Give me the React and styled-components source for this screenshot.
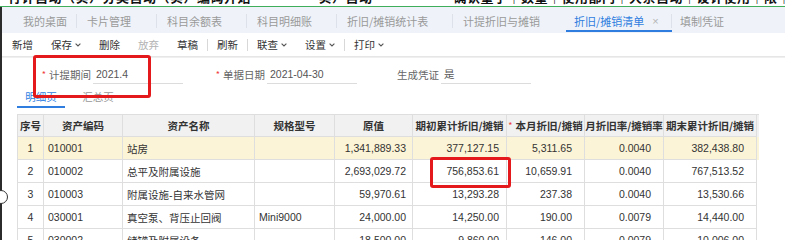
import React from "react";
import styled, { createGlobalStyle } from "styled-components";

const Global = createGlobalStyle`
  html, body { margin: 0; padding: 0; background: #fff; }
  body {
    font-family: "Liberation Sans", "Noto Sans CJK SC", sans-serif;
    font-size: 10.5px;
    color: #333;
    width: 785px;
    height: 240px;
    overflow: hidden;
  }
`;

const Page = styled.div`
  width: 785px;
  height: 240px;
  overflow: hidden;
`;

const TopStrip = styled.div`
  height: 6px;
  overflow: hidden;
  border-bottom: 1px solid #3fae5a;
`;

const StripText = styled.div`
  margin-top: -10px;
  white-space: nowrap;
  font-family: "Noto Sans CJK SC", sans-serif;
  font-size: 13px;
  font-weight: 700;
  line-height: 14px;
  color: #111;
  padding-left: 8px;
  letter-spacing: 0.5px;
`;

const Frame = styled.div`
  position: relative;
  height: 233px;
  border-left: 2px solid #2b2b2b;
`;

const TabBar = styled.div`
  height: 26px;
  background: #eff3f9;
  display: flex;
  align-items: stretch;
  padding-left: 11px;
`;

const Tab = styled.div`
  position: relative;
  flex: none;
  width: ${(p) => p.$w}px;
  box-sizing: border-box;
  padding-left: ${(p) => p.$pl ?? 10}px;
  padding-top: 2px;
  display: flex;
  align-items: center;
  font-size: 11px;
  font-family: "Noto Sans CJK SC", sans-serif;
  color: ${(p) => (p.$active ? "#2f7ddf" : "#9a9a9a")};
  white-space: nowrap;
  &::before {
    content: "";
    display: ${(p) => (p.$active ? "block" : "none")};
    position: absolute;
    left: 0;
    right: 0;
    bottom: 1px;
    height: 2px;
    background: #2f7ddf;
  }
  &::after {
    content: "";
    display: ${(p) => (p.$sep ? "block" : "none")};
    position: absolute;
    right: 0;
    top: 7px;
    height: 14px;
    width: 1px;
    background: #dde2ea;
  }
`;

const Close = styled.span`
  margin-left: 8px;
  color: #b5b5b5;
  font-size: 11px;
  font-family: "Liberation Sans", sans-serif;
`;

const Toolbar = styled.div`
  height: 23px;
  display: flex;
  align-items: center;
  padding-left: 1px;
  border-bottom: 1px solid #e6e6e6;
  box-shadow: 0 1px 0 #efefef;
`;

const ToolItem = styled.div`
  display: flex;
  align-items: center;
  padding: 0 9px;
  font-family: "Noto Sans CJK SC", sans-serif;
  font-size: 10.5px;
  color: ${(p) => (p.$disabled ? "#b3b3b3" : "#333")};
  white-space: nowrap;
`;

const ToolSep = styled.div`
  width: 1px;
  height: 12px;
  background: #d8d8d8;
`;

const Chevron = () => (
  <svg width="6" height="4" viewBox="0 0 6 4" style={{ marginLeft: 3 }}>
    <path d="M0.6 0.6 L3 3 L5.4 0.6" fill="none" stroke="#555" strokeWidth="1.1" />
  </svg>
);

const FormRow = styled.div`
  display: flex;
  gap: 26px;
  padding: 7px 0 0 33px;
`;

const Field = styled.div`
  display: flex;
  width: 148px;
  height: 20px;
  align-items: stretch;
`;

const FieldLabel = styled.div`
  width: 58px;
  box-sizing: border-box;
  padding-right: 2px;
  display: flex;
  align-items: center;
  justify-content: flex-end;
  font-family: "Noto Sans CJK SC", sans-serif;
  color: #666;
  font-size: 10.5px;
  white-space: nowrap;
`;

const Star = styled.span`
  color: #f04040;
  margin-right: 3px;
  font-size: 9px;
  font-weight: 400;
`;

const FieldValue = styled.div`
  width: 90px;
  box-sizing: border-box;
  border-bottom: 1px solid #dcdcdc;
  padding-left: 3px;
  display: flex;
  align-items: center;
  color: #555;
  font-size: 10.5px;
  font-family: "Liberation Sans", "Noto Sans CJK SC", sans-serif;
`;

const SubTabs = styled.div`
  display: flex;
  gap: 9px;
  margin: 3px 0 0 15px;
`;

const SubTab = styled.div`
  width: 48px;
  height: 21px;
  box-sizing: border-box;
  display: flex;
  align-items: center;
  justify-content: center;
  font-family: "Noto Sans CJK SC", sans-serif;
  font-size: 10.5px;
  color: ${(p) => (p.$active ? "#2f7ddf" : "#999")};
  border-bottom: 2px solid ${(p) => (p.$active ? "#2f7ddf" : "transparent")};
`;

const COLS = "26px 79px 132px 80px 78px 94px 78px 79px 93px";

const Grid = styled.div`
  margin: 6px 0 0 15px;
  width: 741px;
  border-left: 1px solid #dedede;
  border-top: 1px solid #dedede;
`;

const Row = styled.div`
  display: grid;
  grid-template-columns: ${COLS};
  height: ${(p) => (p.$head ? 22 : 23)}px;
  background: ${(p) => (p.$head ? "#f1f1f1" : p.$hl ? "#fcf4d6" : "#fff")};
`;

const HeadCell = styled.div`
  border-right: 1px solid #dedede;
  border-bottom: 1px solid #dedede;
  display: flex;
  align-items: center;
  justify-content: center;
  font-family: "Noto Sans CJK SC", sans-serif;
  font-weight: 700;
  color: #333;
  white-space: nowrap;
  overflow: hidden;
`;

const Cell = styled.div`
  border-right: 1px solid #dedede;
  border-bottom: 1px solid #dedede;
  display: flex;
  align-items: center;
  justify-content: ${(p) =>
    p.$align === "right" ? "flex-end" : p.$align === "center" ? "center" : "flex-start"};
  padding: 0 ${(p) => p.$pr ?? 0}px 0 ${(p) => p.$pl ?? 0}px;
  color: #333;
  white-space: nowrap;
  overflow: hidden;
  font-family: "Liberation Sans", "Noto Sans CJK SC", sans-serif;
`;

const Annot = styled.div`
  position: absolute;
  border: 3px solid #e3191c;
  border-radius: 3px;
  box-sizing: border-box;
  pointer-events: none;
`;

const Handle = styled.div`
  position: absolute;
  left: -8px;
  top: 183px;
  width: 12px;
  height: 12px;
  border-radius: 50%;
  background: #fff;
  border: 1px solid #333;
`;

const tabs = [
  { t: "我的桌面", w: 64, sep: true },
  { t: "卡片管理", w: 80, sep: true },
  { t: "科目余额表", w: 90, sep: true },
  { t: "科目明细账", w: 90, sep: true },
  { t: "折旧/摊销统计表", w: 116, sep: true },
  { t: "计提折旧与摊销", w: 113, sep: false },
  { t: "折旧/摊销清单", w: 106, sep: true, active: true, pl: 8 },
  { t: "填制凭证", w: 100, sep: false, pl: 8 },
];

const heads = [
  "序号",
  "资产编码",
  "资产名称",
  "规格型号",
  "原值",
  "期初累计折旧/摊销",
  "*本月折旧/摊销",
  "月折旧率/摊销率",
  "期末累计折旧/摊销",
];

const rows = [
  ["1", "010001", "站房", "", "1,341,889.33", "377,127.15", "5,311.65", "0.0040", "382,438.80"],
  ["2", "010002", "总平及附属设施", "", "2,693,029.72", "756,853.61", "10,659.91", "0.0040", "767,513.52"],
  ["3", "010003", "附属设施-自来水管网", "", "59,970.61", "13,293.28", "237.38", "0.0040", "13,530.66"],
  ["4", "030001", "真空泵、背压止回阀", "Mini9000", "24,000.00", "14,250.00", "190.00", "0.0079", "14,440.00"],
  ["5", "030002", "储罐及附属设备", "", "18,500.00", "9,860.00", "146.00", "0.0079", "10,006.00"],
];

const cellProps = [
  { $align: "center" },
  { $pl: 4 },
  { $pl: 4 },
  { $pl: 4 },
  { $align: "right", $pr: 6 },
  { $align: "right", $pr: 7 },
  { $align: "right", $pr: 12 },
  { $align: "right", $pr: 12 },
  { $align: "right", $pr: 12 },
];

export default function App() {
  return (
    <Page>
      <Global />
      <TopStrip>
        <StripText>
          行计自动（实）分类自动（实）编码开始　　　　　实）自动　　　　　　确认量子｜数量｜使用部门｜大系自动｜设计使用｜限｜已计提｜限
        </StripText>
      </TopStrip>
      <Frame>
        <TabBar>
          {tabs.map((t) => (
            <Tab key={t.t} $w={t.w} $sep={t.sep} $active={t.active} $pl={t.pl}>
              {t.t}
              {t.active && <Close>×</Close>}
            </Tab>
          ))}
        </TabBar>
        <Toolbar>
          <ToolItem>新增</ToolItem>
          <ToolItem>保存<Chevron /></ToolItem>
          <ToolItem>删除</ToolItem>
          <ToolItem $disabled>放弃</ToolItem>
          <ToolItem>草稿</ToolItem>
          <ToolSep />
          <ToolItem>刷新</ToolItem>
          <ToolSep />
          <ToolItem>联查<Chevron /></ToolItem>
          <ToolItem>设置<Chevron /></ToolItem>
          <ToolSep />
          <ToolItem>打印<Chevron /></ToolItem>
        </Toolbar>
        <FormRow>
          <Field>
            <FieldLabel><Star>*</Star>计提期间</FieldLabel>
            <FieldValue>2021.4</FieldValue>
          </Field>
          <Field>
            <FieldLabel><Star>*</Star>单据日期</FieldLabel>
            <FieldValue>2021-04-30</FieldValue>
          </Field>
          <Field>
            <FieldLabel>生成凭证</FieldLabel>
            <FieldValue>是</FieldValue>
          </Field>
        </FormRow>
        <SubTabs>
          <SubTab $active>明细页</SubTab>
          <SubTab>汇总页</SubTab>
        </SubTabs>
        <Grid>
          <Row $head>
            {heads.map((h) => (
              <HeadCell key={h}>
                {h.startsWith("*") ? (
                  <>
                    <Star>*</Star>
                    {h.slice(1)}
                  </>
                ) : (
                  h
                )}
              </HeadCell>
            ))}
          </Row>
          {rows.map((r, i) => (
            <Row key={i} $hl={i === 0}>
              {r.map((c, j) => (
                <Cell key={j} {...cellProps[j]}>{c}</Cell>
              ))}
            </Row>
          ))}
        </Grid>
        <Annot style={{ left: 31, top: 48, width: 118, height: 43 }} />
        <Annot style={{ left: 428, top: 150, width: 81, height: 31 }} />
        <Handle />
      </Frame>
    </Page>
  );
}
